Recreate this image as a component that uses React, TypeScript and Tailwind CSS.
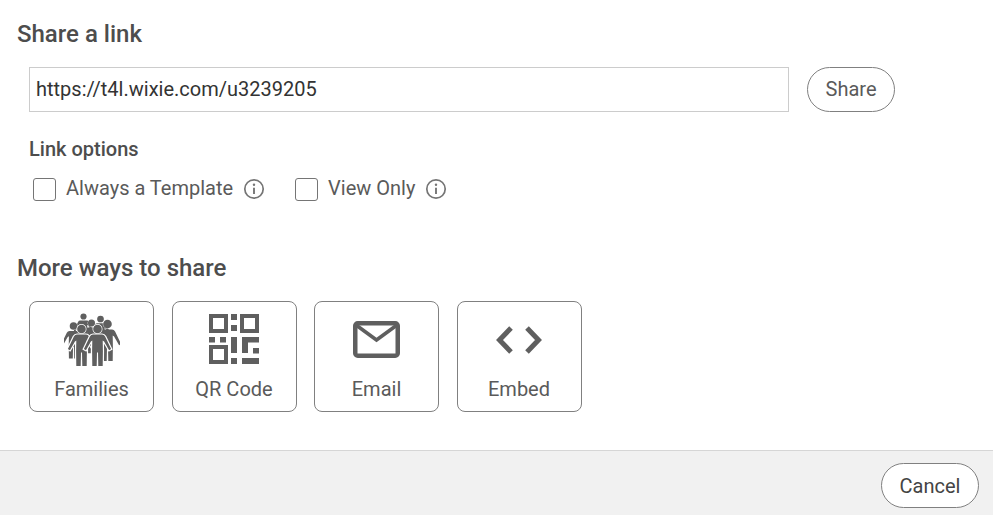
import React from "react";

// one standing figure, origin at the centre of the head
function Person({ x, y, s = 1, halo = false }: { x: number; y: number; s?: number; halo?: boolean }) {
  const body =
    "M-4.5 5.6 L4.5 5.6 Q6.6 5.6 7.6 7.6 L13.6 20 L11.6 21.2 L6.6 12.6 L5.2 11.6 L5.4 22 L5.2 37 L0.8 37 L0.5 23.5 L-0.5 23.5 L-0.8 37 L-5.2 37 L-5.4 22 L-5.2 11.6 L-6.6 12.6 L-11.6 21.2 L-13.6 20 L-7.6 7.6 Q-6.6 5.6 -4.5 5.6 Z";
  return (
    <g transform={`translate(${x} ${y}) scale(${s})`}>
      <path
        d={body}
        fill="#5f5f5f"
        stroke={halo ? "#fff" : "none"}
        strokeWidth={halo ? 2.4 : 0}
        paintOrder="stroke"
      />
      <circle
        cx="0"
        cy="0"
        r="4.3"
        fill="#5f5f5f"
        stroke="#fff"
        strokeWidth={halo ? 1.4 : 0.9}
        paintOrder="stroke"
      />
    </g>
  );
}

function FamiliesIcon() {
  return (
    <svg width="56" height="54" viewBox="0 0 56 54">
      <Person x={19.5} y={3.5} s={0.72} />
      <Person x={36.5} y={6} s={0.78} />
      <Person x={27.5} y={10} s={0.82} />
      <Person x={9.5} y={13} s={0.88} />
      <Person x={43.5} y={11} s={1} />
      <Person x={17.5} y={16} s={1} halo />
      <Person x={33.5} y={16} s={1} halo />
    </svg>
  );
}

function QrIcon() {
  return (
    <svg width="50" height="50" viewBox="0 0 50 50" fill="#5f5f5f">
      <path fillRule="evenodd" d="M0 0H19V19H0ZM4 4V15H15V4Z" />
      <path fillRule="evenodd" d="M31 0H50V19H31ZM35 4V15H46V4Z" />
      <path fillRule="evenodd" d="M0 31H19V50H0ZM4 35V46H15V35Z" />
      <rect x="22" y="0" width="6" height="6" />
      <rect x="22" y="11" width="6" height="6" />
      <rect x="0" y="23" width="6" height="5.5" />
      <rect x="11" y="23" width="6" height="5.5" />
      <rect x="22" y="23" width="6" height="16" />
      <path d="M33 23H50V28.5H39V39H33Z" />
      <rect x="44" y="34" width="6" height="5.5" />
      <rect x="22" y="44" width="6" height="6" />
      <rect x="33" y="44" width="17" height="6" />
    </svg>
  );
}

function EmailIcon() {
  return (
    <svg width="47" height="37" viewBox="0 0 47 37" fill="none" stroke="#5f5f5f">
      <rect x="2.25" y="2.25" width="42.5" height="32.5" rx="2.5" strokeWidth="4.5" />
      <path d="M3 4 L23.5 19 L44 4" strokeWidth="3.6" />
    </svg>
  );
}

function EmbedIcon() {
  return (
    <svg width="46" height="28" viewBox="0 0 46 28" fill="none" stroke="#5f5f5f" strokeWidth="5">
      <path d="M15 2 L3.5 14 L15 26" />
      <path d="M31 2 L42.5 14 L31 26" />
    </svg>
  );
}

function InfoIcon() {
  return (
    <svg width="22" height="22" viewBox="0 0 22 22" fill="none" stroke="#757575" className="shrink-0">
      <circle cx="11" cy="11" r="9.2" strokeWidth="1.7" />
      <circle cx="11" cy="6.8" r="1.2" fill="#757575" stroke="none" />
      <path d="M11 9.8V16" strokeWidth="1.9" />
    </svg>
  );
}

function LinkOption({ label, iconGap }: { label: string; iconGap: string }) {
  return (
    <label className="flex items-center">
      <span className="h-[23px] w-[23px] shrink-0 rounded-[3px] border border-[#757575] bg-white" />
      <span className="ml-[10px] -translate-y-px text-[20px] leading-[24px] text-[#5a5a5a]">{label}</span>
      <span className={iconGap}>
        <InfoIcon />
      </span>
    </label>
  );
}

function ShareTile({ label, icon, top }: { label: string; icon: React.ReactNode; top: string }) {
  return (
    <button className="flex h-[111px] w-[125px] flex-col items-center rounded-[8px] border border-[#808080] bg-white">
      <div className={`flex h-[72px] w-full items-start justify-center ${top}`}>{icon}</div>
      <span className="mt-[3px] text-[20px] leading-[24px] text-[#5a5a5a]">{label}</span>
    </button>
  );
}

export default function App() {
  return (
    <div className="flex h-[515px] w-[993px] flex-col overflow-hidden bg-white font-['Roboto',sans-serif]">
      <div className="flex-1 pl-[17px] pt-[19px]">
        <h2 className="text-[24px] font-medium leading-[30px] text-[#4d4d4d]">Share a link</h2>

        <div className="ml-[12px] mt-[18px] flex items-center">
          <input
            readOnly
            value="https://t4l.wixie.com/u3239205"
            className="h-[45px] w-[760px] border border-[#ccc] pb-[2px] pl-[6px] pr-[7px] text-[20px] text-[#333] outline-none"
          />
          <button className="ml-[18px] h-[45px] w-[88px] rounded-full border border-[#808080] bg-white pb-[2px] text-[20px] text-[#5a5a5a]">
            Share
          </button>
        </div>

        <div className="ml-[12px] mt-[24px] text-[20px] font-medium leading-[26px] text-[#4d4d4d]">Link options</div>
        <div className="ml-[16px] mt-[15px] flex items-center">
          <LinkOption label="Always a Template" iconGap="ml-[10px]" />
          <div className="ml-[30px]">
            <LinkOption label="View Only" iconGap="ml-[10px]" />
          </div>
        </div>

        <h2 className="mt-[52px] text-[24px] font-medium leading-[30px] text-[#4d4d4d]">More ways to share</h2>
        <div className="ml-[12px] mt-[18px] flex gap-[17.5px]">
          <ShareTile label="Families" icon={<FamiliesIcon />} top="pt-[11px]" />
          <ShareTile label="QR Code" icon={<QrIcon />} top="pt-[12px]" />
          <ShareTile label="Email" icon={<EmailIcon />} top="pt-[19px]" />
          <ShareTile label="Embed" icon={<EmbedIcon />} top="pt-[24px]" />
        </div>
      </div>

      <div className="flex h-[65px] items-start justify-end border-t border-[#d6d6d6] bg-[#f1f1f1] pr-[14px] pt-[12px]">
        <button className="h-[45px] w-[98px] rounded-full border border-[#808080] bg-white text-[20px] text-[#444]">
          Cancel
        </button>
      </div>
    </div>
  );
}
